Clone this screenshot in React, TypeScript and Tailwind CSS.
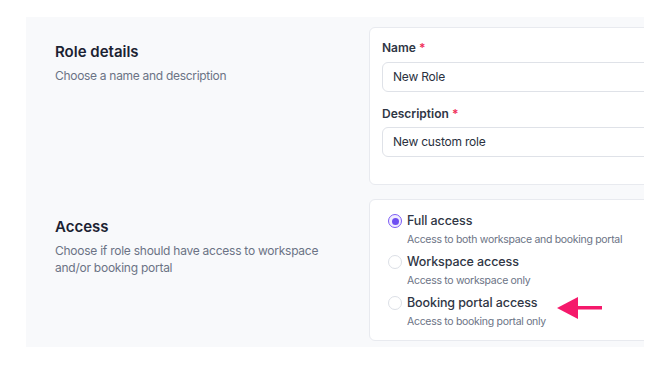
import React from "react";

const font = { fontFamily: "Inter, 'Noto Sans', sans-serif" };

function Radio({ checked }: { checked?: boolean }) {
  return checked ? (
    <span className="mt-[1px] flex h-[14px] w-[14px] shrink-0 items-center justify-center rounded-full border-[1.5px] border-[#7c5cf5] bg-[#f1edff]">
      <span className="h-[7px] w-[7px] rounded-full bg-[#6e4ef2]" />
    </span>
  ) : (
    <span className="mt-[1px] h-[14px] w-[14px] shrink-0 rounded-full border border-[#dcdfe6] bg-white" />
  );
}

function Option({ title, desc, checked }: { title: string; desc: string; checked?: boolean }) {
  return (
    <div className="flex gap-[5px]">
      <Radio checked={checked} />
      <div className="flex flex-col">
        <div className="text-[12.5px] font-medium leading-[16px] tracking-[-0.1px] text-[#2f3645]">{title}</div>
        <div className="mt-[4px] text-[10.5px] leading-[14px] tracking-[-0.3px] text-[#6b7385]">{desc}</div>
      </div>
    </div>
  );
}

export default function App() {
  return (
    <div className="h-[376px] w-[670px] bg-white pl-[26px] pt-[17px]" style={font}>
      <div className="h-[330px] w-[618px] overflow-hidden bg-[#f8f9fb] pt-[10px]">
        <div className="flex">
          <div className="w-[343px] shrink-0 pl-[29px] pt-[15px]">
            <div className="text-[15px] font-semibold leading-[20px] text-[#1b2232]">Role details</div>
            <div className="mt-[6px] text-[12px] leading-[16px] tracking-[-0.3px] text-[#6b7385]">Choose a name and description</div>
          </div>
          <div className="h-[158px] w-[320px] shrink-0 rounded-[6px] border border-[#e8eaef] bg-white pl-[12px] pt-[12px]">
            <div className="text-[12px] font-semibold leading-[16px] text-[#2f3645]">
              Name <span className="text-[#f0305a]">*</span>
            </div>
            <div className="mt-[6px] flex h-[30px] items-center rounded-[6px] border border-[#dfe2e8] pl-[10px] text-[12px] tracking-[-0.2px] text-[#2a3140]">
              New Role
            </div>
            <div className="mt-[14px] text-[12px] font-semibold leading-[16px] text-[#2f3645]">
              Description <span className="text-[#f0305a]">*</span>
            </div>
            <div className="mt-[5px] flex h-[30px] items-center rounded-[6px] border border-[#dfe2e8] pl-[10px] text-[12px] tracking-[-0.2px] text-[#2a3140]">
              New custom role
            </div>
          </div>
        </div>
        <div className="mt-[14px] flex">
          <div className="w-[343px] shrink-0 pl-[29px] pt-[18px]">
            <div className="text-[15px] font-semibold leading-[20px] text-[#1b2232]">Access</div>
            <div className="mt-[5px] w-[280px] text-[12px] leading-[17px] tracking-[-0.25px] text-[#6b7385]">
              Choose if role should have access to workspace and/or booking portal
            </div>
          </div>
          <div className="relative flex h-[142px] w-[320px] shrink-0 flex-col gap-[7px] rounded-[6px] border border-[#e8eaef] bg-white pl-[18px] pt-[13px]">
            <Option checked title="Full access" desc="Access to both workspace and booking portal" />
            <Option title="Workspace access" desc="Access to workspace only" />
            <Option title="Booking portal access" desc="Access to booking portal only" />
            <svg className="absolute left-[187px] top-[97px]" width="46" height="22" viewBox="0 0 46 22">
              <polygon points="0,11 21,0 21,22" fill="#f5196b" />
              <rect x="18" y="9" width="27" height="3.5" fill="#f5196b" />
            </svg>
          </div>
        </div>
      </div>
    </div>
  );
}
